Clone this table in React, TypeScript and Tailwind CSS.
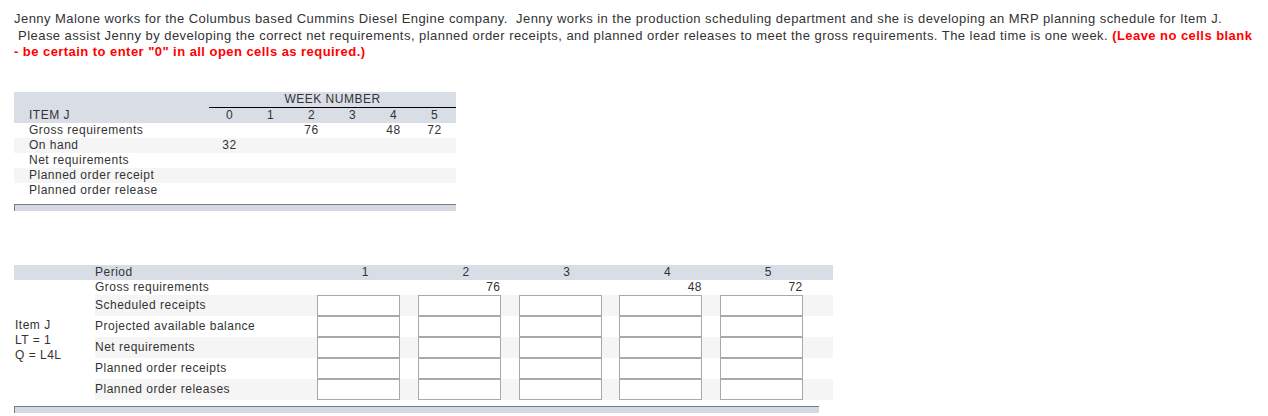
import React from "react";

const F = { fontFamily: '"Liberation Sans", Arial, sans-serif' };

export default function App() {
  const weeks = [0, 1, 2, 3, 4, 5];
  const topRows: { label: string; vals: Record<number, string> }[] = [
    { label: "Gross requirements", vals: { 2: "76", 4: "48", 5: "72" } },
    { label: "On hand", vals: { 0: "32" } },
    { label: "Net requirements", vals: {} },
    { label: "Planned order receipt", vals: {} },
    { label: "Planned order release", vals: {} },
  ];
  const periods = [1, 2, 3, 4, 5];
  const gross: Record<number, string> = { 2: "76", 4: "48", 5: "72" };
  const inputRows = [
    "Scheduled receipts",
    "Projected available balance",
    "Net requirements",
    "Planned order receipts",
    "Planned order releases",
  ];

  return (
    <div className="w-[1268px] h-[416px] overflow-hidden bg-white text-[#333]" style={F}>
      <div className="pt-[11px] pl-[14px] text-[13px] leading-[16.5px] tracking-[0.45px] whitespace-nowrap">
        <div>
          Jenny Malone works for the Columbus based Cummins Diesel Engine company.&nbsp; Jenny works in the production scheduling department and she is developing an MRP planning schedule for Item J.
        </div>
        <div>
          &nbsp;Please assist Jenny by developing the correct net requirements, planned order receipts, and planned order releases to meet the gross requirements. The lead time is one week.{" "}
          <span className="font-bold text-[#ff0000]">(Leave no cells blank</span>
        </div>
        <div className="font-bold text-[#ff0000]">- be certain to enter "0" in all open cells as required.)</div>
      </div>

      {/* Top table */}
      <div className="mt-[31px] ml-[14px] w-[442px] text-[12px] leading-[15px] tracking-[0.5px]">
        <div className="bg-[#d9dde6]">
          <div className="flex">
            <div className="w-[195px]" />
            <div className="w-[247px] h-[16px] border-b border-black text-center">WEEK NUMBER</div>
          </div>
          <div className="flex h-[15px]">
            <div className="w-[195px] pl-[15px]">ITEM J</div>
            {weeks.map((w) => (
              <div key={w} className="w-[41px] text-center">
                {w}
              </div>
            ))}
          </div>
        </div>
        {topRows.map((r, i) => (
          <div key={r.label} className={`flex h-[15px] ${i % 2 === 1 ? "bg-[#f5f5f5]" : "bg-white"}`}>
            <div className="w-[195px] pl-[15px]">{r.label}</div>
            {weeks.map((w) => (
              <div key={w} className="w-[41px] text-center">
                {r.vals[w] ?? ""}
              </div>
            ))}
          </div>
        ))}
        <div className="mt-[6px] h-[7px] border-t border-l border-[#7a7d85] bg-[#d3d8e2]" />
      </div>

      {/* Bottom table */}
      <div className="mt-[54px] ml-[14px] w-[819px] text-[12px] leading-[15px] tracking-[0.5px]">
        <div className="flex h-[15px] bg-[#d9dde6]">
          <div className="w-[81px]" />
          <div className="w-[220px]">Period</div>
          {periods.map((p) => (
            <div key={p} className="w-[100.75px] text-center">
              {p}
            </div>
          ))}
        </div>
        <div className="flex">
          <div className="w-[81px] flex flex-col justify-center pl-[1px] pt-[2px]">
            <div>Item J</div>
            <div>LT = 1</div>
            <div>Q = L4L</div>
          </div>
          <div className="flex-1">
            <div className="flex h-[15px]">
              <div className="w-[220px]">Gross requirements</div>
              {periods.map((p) => (
                <div key={p} className="w-[100.75px] text-right pr-[16px]">
                  {gross[p] ?? ""}
                </div>
              ))}
            </div>
            {inputRows.map((label, i) => (
              <div key={label} className={`flex h-[21px] ${i % 2 === 0 ? "bg-[#f5f5f5]" : "bg-white"}`}>
                <div className="w-[220px] flex items-center">{label}</div>
                {periods.map((p) => (
                  <div key={p} className="w-[100.75px] pl-[2px]">
                    <input
                      type="text"
                      className="block w-[83px] h-[21px] border border-[#a9a9a9] bg-white outline-none"
                    />
                  </div>
                ))}
              </div>
            ))}
          </div>
        </div>
        <div className="mt-[6px] w-[805px] h-[7px] border-t border-l border-[#7a7d85] bg-[#d3d8e2]" />
      </div>
    </div>
  );
}
